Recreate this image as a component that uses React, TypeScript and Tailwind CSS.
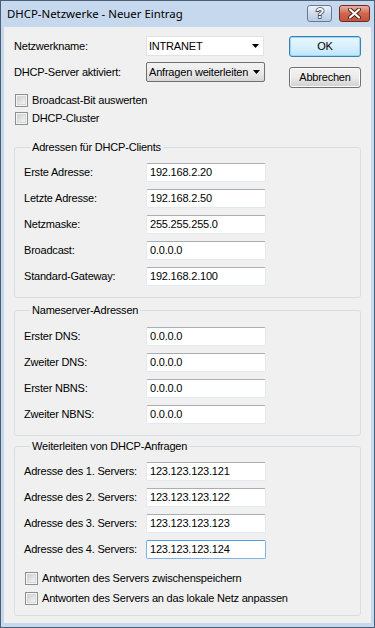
import React from "react";

const Arrow = () => (
  <svg width="7" height="4" viewBox="0 0 7 4" className="shrink-0">
    <path d="M0 0 H7 L3.5 4 Z" fill="#000" />
  </svg>
);

const TextBox = ({ value, focused }: { value: string; focused?: boolean }) => (
  <div
    className={
      focused
        ? "w-[120px] h-[19px] bg-white border border-[#7eb4ea] border-t-[#569de5] rounded-[2px] flex items-center pl-[3px] text-black"
        : "w-[120px] h-[19px] bg-white border border-[#e3e9ef] border-t-[#abadb3] rounded-[2px] flex items-center pl-[3px] text-black"
    }
  >
    {value}
  </div>
);

const Row = ({ label, value, focused }: { label: string; value: string; focused?: boolean }) => (
  <div className="flex items-center h-[19px]">
    <span className="w-[122px] shrink-0">{label}</span>
    <TextBox value={value} focused={focused} />
  </div>
);

const Check = ({ label }: { label: string }) => (
  <div className="flex items-center h-[13px] gap-[4px]">
    <span className="w-[13px] h-[13px] border border-[#8e8f8f] bg-[#f4f4f4] flex items-center justify-center shrink-0">
      <span className="w-[9px] h-[9px] bg-gradient-to-br from-[#cbcfd5] to-[#f6f6f6] border border-[#d8d8d8]" />
    </span>
    <span className="leading-[13px]">{label}</span>
  </div>
);

const Group = ({ title, className, children }: { title: string; className: string; children: React.ReactNode }) => (
  <fieldset className={className}>
    <legend className="ml-[6px] px-[2px] leading-[13px]">{title}</legend>
    {children}
  </fieldset>
);

export default function App() {
  return (
    <div className="w-[375px] h-[628px] bg-[#c6d8ed] border border-[#4b5f77] flex flex-col font-['Liberation_Sans',Arial,sans-serif] text-[11px] tracking-[-0.2px] text-black overflow-hidden">
      {/* Title bar */}
      <div className="h-[26px] flex items-center pl-[6px] pr-[4px] shrink-0">
        <span className="font-['Noto_Sans',sans-serif] text-[11.4px] tracking-normal text-black leading-none">
          DHCP-Netzwerke - Neuer Eintrag
        </span>
        <div className="ml-auto flex items-center gap-[7px] mt-[-2px]">
          <div className="w-[25px] h-[17px] rounded-[3px] border border-[#687994] bg-gradient-to-b from-[#eef3fa] via-[#cfdcee] to-[#b8cbe5] flex items-center justify-center">
            <svg width="12" height="14" viewBox="0 0 12 14">
              <text
                x="6"
                y="12"
                textAnchor="middle"
                fontFamily="Liberation Sans, Arial, sans-serif"
                fontWeight="bold"
                fontSize="14"
                fill="#ffffff"
                stroke="#3d4a5c"
                strokeWidth="1.6"
                paintOrder="stroke"
              >
                ?
              </text>
            </svg>
          </div>
          <div className="w-[31px] h-[17px] rounded-[3px] border border-[#6e2c22] bg-gradient-to-b from-[#eab1a3] via-[#d0664f] to-[#c4533c] flex items-center justify-center">
            <svg width="13" height="11" viewBox="0 0 13 11">
              <path
                d="M2 1.5 L11 9.5 M11 1.5 L2 9.5"
                stroke="#4a1d16"
                strokeWidth="4"
                strokeLinecap="round"
              />
              <path
                d="M2 1.5 L11 9.5 M11 1.5 L2 9.5"
                stroke="#ffffff"
                strokeWidth="2.2"
                strokeLinecap="round"
              />
            </svg>
          </div>
        </div>
      </div>

      {/* Client area */}
      <div className="flex-1 mx-[3px] mb-[4px] bg-[#f0f0f0] px-[10px] pt-[9px] flex flex-col">
        {/* top section */}
        <div className="flex">
          <div className="flex flex-col">
            <div className="flex items-center h-[20px]">
              <span className="w-[132px] shrink-0">Netzwerkname:</span>
              <div className="w-[118px] h-[20px] bg-white border border-[#e3e3e3] flex items-center pl-[2px] pr-[4px]">
                <span className="flex-1">INTRANET</span>
                <Arrow />
              </div>
            </div>
            <div className="flex items-center h-[20px] mt-[6px]">
              <span className="w-[132px] shrink-0">DHCP-Server aktiviert:</span>
              <div className="w-[119px] h-[20px] rounded-[2px] border border-[#707070] bg-gradient-to-b from-[#f2f2f2] via-[#ebebeb] to-[#d6d6d6] flex items-center pl-[2px] pr-[4px]">
                <span className="w-[100px] overflow-hidden whitespace-nowrap">Anfragen weiterleiten</span>
                <span className="flex-1" />
                <Arrow />
              </div>
            </div>
            <div className="mt-[12px] pl-[1px]">
              <Check label="Broadcast-Bit auswerten" />
            </div>
            <div className="mt-[5px] pl-[1px]">
              <Check label="DHCP-Cluster" />
            </div>
          </div>
          <div className="ml-auto flex flex-col gap-[10px]">
            <div className="w-[72px] h-[21px] rounded-[3px] border border-[#3c7fb1] bg-gradient-to-b from-[#eaf6fd] via-[#d9f0fc] to-[#bee6fd] shadow-[inset_0_0_0_1px_#97d8f8] flex items-center justify-center">
              OK
            </div>
            <div className="w-[72px] h-[21px] rounded-[3px] border border-[#707070] bg-gradient-to-b from-[#f2f2f2] via-[#ebebeb] to-[#cfcfcf] shadow-[inset_0_0_0_1px_#fcfcfc] flex items-center justify-center">
              Abbrechen
            </div>
          </div>
        </div>

        <Group
          title="Adressen für DHCP-Clients"
          className="mt-[16px] border border-[#d5dfe5] rounded-[3px] px-[9px] pt-[9px] pb-[11px]"
        >
          <div className="flex flex-col gap-[7px]">
            <Row label="Erste Adresse:" value="192.168.2.20" />
            <Row label="Letzte Adresse:" value="192.168.2.50" />
            <Row label="Netzmaske:" value="255.255.255.0" />
            <Row label="Broadcast:" value="0.0.0.0" />
            <Row label="Standard-Gateway:" value="192.168.2.100" />
          </div>
        </Group>

        <Group
          title="Nameserver-Adressen"
          className="mt-[6px] border border-[#d5dfe5] rounded-[3px] px-[9px] pt-[10px] pb-[11px]"
        >
          <div className="flex flex-col gap-[7px]">
            <Row label="Erster DNS:" value="0.0.0.0" />
            <Row label="Zweiter DNS:" value="0.0.0.0" />
            <Row label="Erster NBNS:" value="0.0.0.0" />
            <Row label="Zweiter NBNS:" value="0.0.0.0" />
          </div>
        </Group>

        <Group
          title="Weiterleiten von DHCP-Anfragen"
          className="mt-[4px] border border-[#d5dfe5] rounded-[3px] px-[9px] pt-[9px] pb-[10px]"
        >
          <div className="flex flex-col gap-[7px]">
            <Row label="Adresse des 1. Servers:" value="123.123.123.121" />
            <Row label="Adresse des 2. Servers:" value="123.123.123.122" />
            <Row label="Adresse des 3. Servers:" value="123.123.123.123" />
            <Row label="Adresse des 4. Servers:" value="123.123.123.124" focused />
          </div>
          <div className="mt-[13px] pl-[1px]">
            <Check label="Antworten des Servers zwischenspeichern" />
          </div>
          <div className="mt-[7px] pl-[1px]">
            <Check label="Antworten des Servers an das lokale Netz anpassen" />
          </div>
        </Group>
      </div>
    </div>
  );
}
